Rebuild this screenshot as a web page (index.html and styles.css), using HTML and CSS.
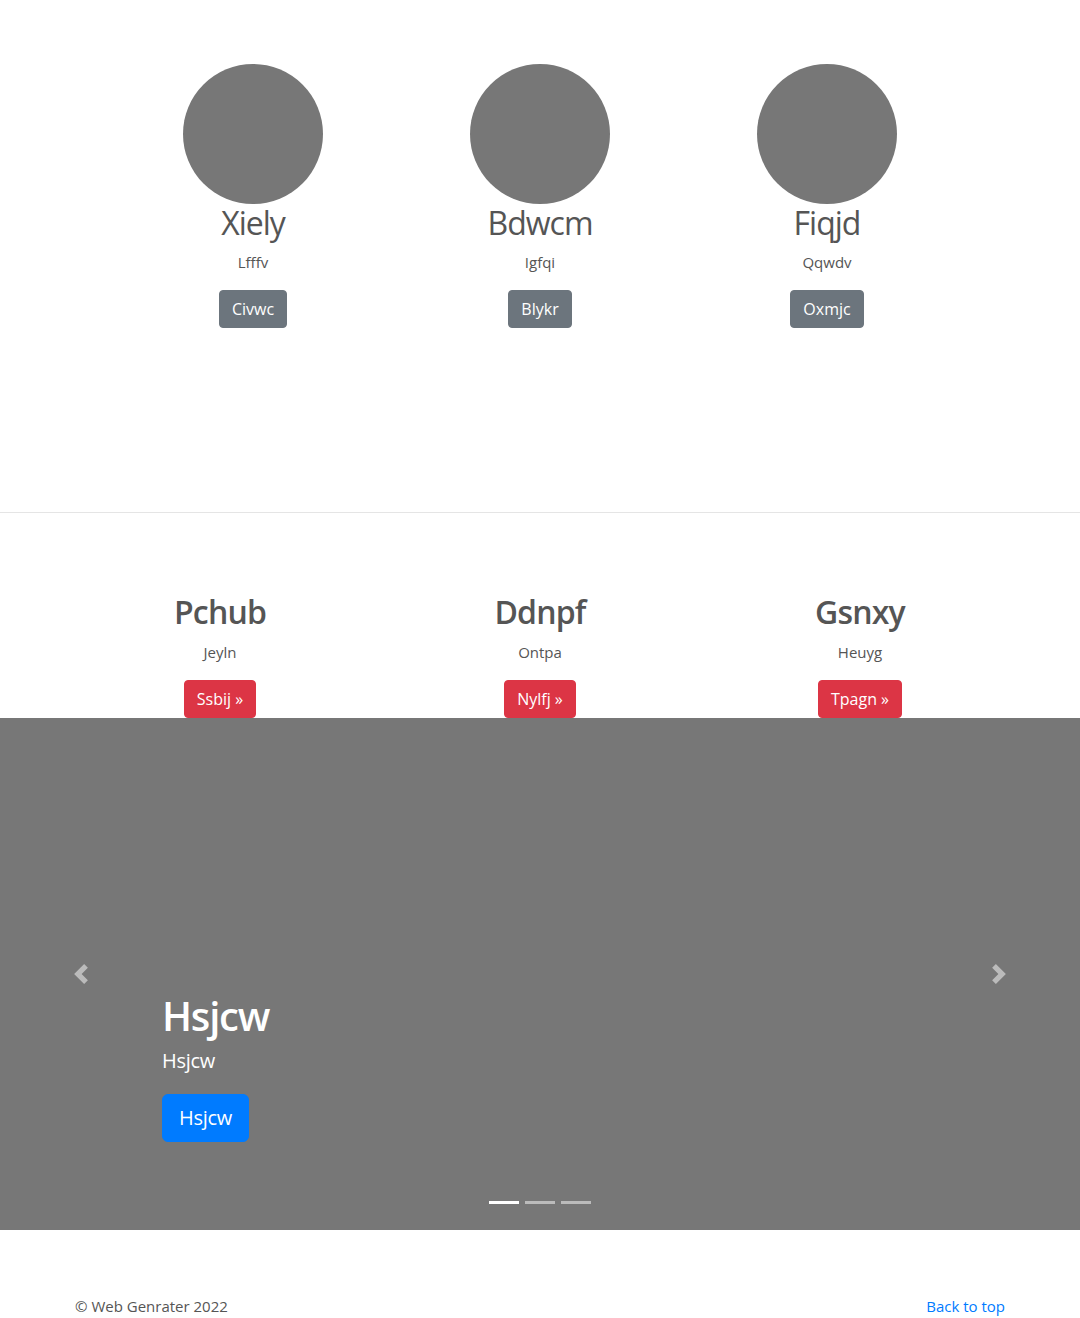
FILE: index.html
```html
<!DOCTYPE html>
<html lang="en">
<head>
<meta charset="utf-8">
<title>Web Genrater</title>
<link rel="stylesheet" href="styles.css">
</head>
<body>
<section class="team">
  <div class="team-row">
    <div class="member">
      <div class="avatar"></div>
      <h2 class="member-name">Xiely</h2>
      <p class="member-role">Lfffv</p>
      <a class="btn btn-secondary" href="#">Civwc</a>
    </div>
    <div class="member">
      <div class="avatar"></div>
      <h2 class="member-name">Bdwcm</h2>
      <p class="member-role">Igfqi</p>
      <a class="btn btn-secondary" href="#">Blykr</a>
    </div>
    <div class="member">
      <div class="avatar"></div>
      <h2 class="member-name">Fiqjd</h2>
      <p class="member-role">Qqwdv</p>
      <a class="btn btn-secondary" href="#">Oxmjc</a>
    </div>
  </div>
</section>
<hr class="divider">
<section class="features">
  <div class="container features-row">
    <div class="feature">
      <h2 class="feature-title">Pchub</h2>
      <p class="feature-text">Jeyln</p>
      <a class="btn btn-danger" href="#">Ssbij &raquo;</a>
    </div>
    <div class="feature">
      <h2 class="feature-title">Ddnpf</h2>
      <p class="feature-text">Ontpa</p>
      <a class="btn btn-danger" href="#">Nylfj &raquo;</a>
    </div>
    <div class="feature">
      <h2 class="feature-title">Gsnxy</h2>
      <p class="feature-text">Heuyg</p>
      <a class="btn btn-danger" href="#">Tpagn &raquo;</a>
    </div>
  </div>
</section>
<section class="carousel">
  <div class="carousel-caption">
    <h1 class="caption-title">Hsjcw</h1>
    <p class="caption-lead">Hsjcw</p>
    <p class="caption-action"><a class="btn btn-primary btn-lg" href="#">Hsjcw</a></p>
  </div>
  <a class="carousel-control control-prev" href="#" aria-label="Previous">
    <svg viewBox="0 0 8 8" width="20" height="20"><path fill="#fff" d="M5.25 0l-4 4 4 4 1.5-1.5L4.25 4l2.5-2.5L5.25 0z"/></svg>
  </a>
  <a class="carousel-control control-next" href="#" aria-label="Next">
    <svg viewBox="0 0 8 8" width="20" height="20"><path fill="#fff" d="M2.75 0l-1.5 1.5L3.75 4l-2.5 2.5L2.75 8l4-4-4-4z"/></svg>
  </a>
  <ol class="carousel-indicators">
    <li class="indicator active"></li>
    <li class="indicator"></li>
    <li class="indicator"></li>
  </ol>
</section>
<footer class="footer container">
  <p class="copyright">&copy; Web Genrater 2022</p>
  <a class="back-top" href="#">Back to top</a>
</footer>
</body>
</html>
```
FILE: styles.css
```css
* { box-sizing: border-box; }
html, body { margin: 0; padding: 0; }
body {
  font-family: "Open Sans", "Noto Sans", sans-serif;
  font-size: 16px;
  line-height: 1.5;
  color: #555;
  background: #fff;
}
h1, h2, p { margin: 0; }
.container {
  width: 960px;
  margin: 0 auto;
  padding: 0 15px;
}
.team {
  padding: 64px 0 184px;
}
.team-row {
  width: 861px;
  margin: 0 auto;
  display: grid;
  grid-template-columns: repeat(3, 1fr);
}
.member, .feature {
  display: flex;
  flex-direction: column;
  align-items: center;
  text-align: center;
}
.avatar {
  width: 140px;
  height: 140px;
  border-radius: 50%;
  background: #777;
}
.member-name {
  font-size: 32px;
  font-weight: 400;
  line-height: 1.2;
  letter-spacing: -1px;
  margin-bottom: 8px;
}
.member-role, .feature-text {
  font-size: 15px;
  line-height: 24px;
  margin-bottom: 16px;
}
.divider {
  margin: 0;
  border: 0;
  border-top: 1px solid rgba(0,0,0,.1);
}
.features {
  padding-top: 80px;
}
.features-row {
  display: grid;
  grid-template-columns: repeat(3, 1fr);
  padding: 0;
}
.feature-title {
  font-size: 32px;
  font-weight: 600;
  line-height: 1.2;
  letter-spacing: -0.8px;
  margin-bottom: 8px;
}
.btn {
  display: inline-block;
  font-size: 16px;
  line-height: 24px;
  padding: 6px 12px;
  border-radius: 4px;
  color: #fff;
  text-decoration: none;
  border: 1px solid transparent;
}
.btn-secondary { background: #6c757d; border-color: #6c757d; }
.btn-danger { background: #dc3545; border-color: #dc3545; }
.btn-primary { background: #007bff; border-color: #007bff; }
.btn-lg {
  font-size: 20px;
  line-height: 30px;
  padding: 8px 16px;
  border-radius: 6px;
  letter-spacing: -0.3px;
}
.carousel {
  position: relative;
  height: 512px;
  background: #777;
  display: flex;
  flex-direction: column;
  justify-content: flex-end;
  padding: 0 162px 72px;
  color: #fff;
}
.caption-title {
  font-size: 40px;
  font-weight: 600;
  line-height: 1.2;
  letter-spacing: -1.2px;
  margin-bottom: 6px;
}
.caption-lead {
  font-size: 20px;
  line-height: 30px;
  letter-spacing: -0.3px;
  margin-bottom: 18px;
}
.caption-action { margin-bottom: 16px; }
.carousel-control {
  position: absolute;
  top: 0;
  bottom: 0;
  width: 162px;
  display: flex;
  align-items: center;
  justify-content: center;
  opacity: .5;
}
.control-prev { left: 0; }
.control-next { right: 0; }
.carousel-indicators {
  position: absolute;
  left: 0;
  right: 0;
  bottom: 26px;
  margin: 0;
  padding: 0;
  list-style: none;
  display: flex;
  justify-content: center;
  gap: 6px;
}
.indicator {
  width: 30px;
  height: 3px;
  background: #fff;
  opacity: .5;
}
.indicator.active { opacity: 1; }
.footer {
  display: flex;
  justify-content: space-between;
  padding-top: 64px;
  font-size: 15px;
  line-height: 24px;
}
.back-top { color: #007bff; text-decoration: none; }
```
